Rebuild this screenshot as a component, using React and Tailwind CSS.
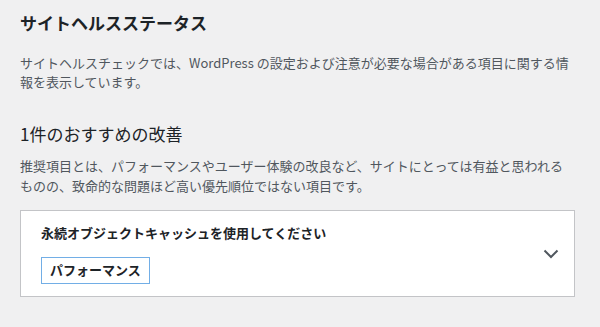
import React from "react";

export default function App() {
  const font = { fontFamily: '"Noto Sans CJK JP", "Noto Sans", sans-serif' };
  return (
    <div className="w-[600px] h-[327px] bg-[#f0f0f1] overflow-hidden" style={font}>
      <div className="pt-[10px] pl-[20px] w-[580px]">
        <h1 className="text-[17px] leading-[25px] font-bold text-[#1d2327]">サイトヘルスステータス</h1>
        <p className="mt-[17.5px] w-[552px] text-[13px] leading-[19.5px] text-[#50575e]">
          サイトヘルスチェックでは、WordPress の設定および注意が必要な場合がある項目に関する情報を表示しています。
        </p>
        <h2 className="mt-[29px] text-[17px] leading-[25px] font-normal text-[#1d2327]">1件のおすすめの改善</h2>
        <p className="mt-[10.75px] w-[552px] text-[13px] leading-[19.5px] text-[#50575e]">
          推奨項目とは、パフォーマンスやユーザー体験の改良など、サイトにとっては有益と思われるものの、致命的な問題ほど高い優先順位ではない項目です。
        </p>
        <div className="mt-[14.75px] w-[555px] h-[87px] bg-white border border-[#c3c4c7] flex items-center justify-between pl-[20px] pr-[15px]">
          <div className="flex flex-col items-start self-start pt-[12px]">
            <div className="text-[13px] leading-[19.5px] font-bold text-[#1d2327]">永続オブジェクトキャッシュを使用してください</div>
            <div className="mt-[14px] h-[27px] px-[8px] border border-[#72aee6] flex items-center text-[13px] font-bold text-[#1d2327]">
              パフォーマンス
            </div>
          </div>
          <svg width="16" height="10" viewBox="0 0 16 10">
            <polyline points="1.5,1.5 8,8 14.5,1.5" fill="none" stroke="#50575e" strokeWidth="2" />
          </svg>
        </div>
      </div>
    </div>
  );
}
